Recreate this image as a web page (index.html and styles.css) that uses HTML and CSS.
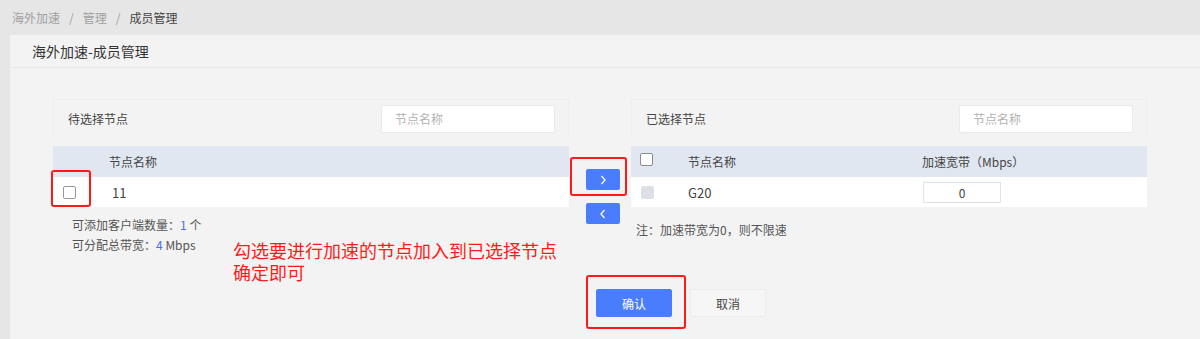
FILE: index.html
```html
<!DOCTYPE html>
<html lang="zh-CN">
<head>
    <meta charset="UTF-8">
    <title>海外加速-成员管理</title>
    <link rel="stylesheet" href="styles.css">
</head>
<body>
    <div class="crumbs">
        <span class="crumb">海外加速</span>
        <span class="sep">/</span>
        <span class="crumb">管理</span>
        <span class="sep">/</span>
        <span class="crumb current">成员管理</span>
    </div>

    <div class="panel">
        <div class="panel-title">海外加速-成员管理</div>

        <div class="panel-body">
            <div class="transfer">
                <div class="side">
                    <div class="side-head">
                        <span>待选择节点</span>
                        <div class="search">节点名称</div>
                    </div>
                    <div class="grid-head left-cols">
                        <span></span>
                        <span>节点名称</span>
                    </div>
                    <div class="grid-row left-cols">
                        <span><i class="check"></i></span>
                        <span class="cell-name">11</span>
                    </div>
                    <div class="info">
                        <p>可添加客户端数量：<b>1</b> 个</p>
                        <p>可分配总带宽：<b>4</b> Mbps</p>
                    </div>
                    <div class="hint">勾选要进行加速的节点加入到已选择节点<br>确定即可</div>
                    <div class="mark mark-check"></div>
                </div>

                <div class="mover">
                    <button class="move">
                        <svg width="8" height="10" viewBox="0 0 8 10"><polyline points="2.5,1 6,5 2.5,9" fill="none" stroke="#fff" stroke-width="1.3"/></svg>
                    </button>
                    <button class="move">
                        <svg width="8" height="10" viewBox="0 0 8 10"><polyline points="5.5,1 2,5 5.5,9" fill="none" stroke="#fff" stroke-width="1.3"/></svg>
                    </button>
                    <div class="mark mark-move"></div>
                </div>

                <div class="side">
                    <div class="side-head">
                        <span>已选择节点</span>
                        <div class="search">节点名称</div>
                    </div>
                    <div class="grid-head right-cols">
                        <span><i class="check"></i></span>
                        <span>节点名称</span>
                        <span>加速宽带（Mbps）</span>
                    </div>
                    <div class="grid-row right-cols">
                        <span><i class="check disabled"></i></span>
                        <span>G20</span>
                        <span><div class="bw">0</div></span>
                    </div>
                    <p class="note">注：加速带宽为0，则不限速</p>
                </div>
            </div>

            <div class="actions">
                <button class="btn primary">确认</button>
                <button class="btn">取消</button>
                <div class="mark mark-ok"></div>
            </div>
        </div>
    </div>
</body>
</html>
```

FILE: styles.css
```css
* {
    margin: 0;
    padding: 0;
    box-sizing: border-box;
}

body {
    background: #e6e6e6;
    font-family: "Noto Sans CJK SC", "Liberation Sans", sans-serif;
    font-size: 12px;
    color: #333;
    height: 339px;
    overflow: hidden;
}

.crumbs {
    height: 35px;
    padding: 0 12px;
    display: flex;
    align-items: center;
    gap: 9px;
    color: #a0a0a0;
    font-size: 12px;
}

.crumbs .current {
    color: #444;
}

.panel {
    margin-left: 10px;
    background: #f3f3f3;
    height: 304px;
}

.panel-title {
    height: 33px;
    padding-left: 22px;
    display: flex;
    align-items: center;
    font-size: 14px;
    color: #333;
    border-bottom: 1px solid #e9e9e9;
}

.panel-body {
    padding: 31px 0 0 43px;
}

.transfer {
    display: flex;
}

.side {
    width: 516px;
    position: relative;
}

.side-head {
    height: 38px;
    border: 1px solid #ebedf0;
    border-bottom: none;
    display: flex;
    align-items: center;
    justify-content: space-between;
    padding: 0 13px 0 14px;
    color: #444;
}

.search {
    width: 174px;
    height: 28px;
    background: #fff;
    border: 1px solid #e6ebf2;
    border-radius: 2px;
    color: #b3b3b3;
    padding-left: 13px;
    display: flex;
    align-items: center;
}

.grid-head,
.grid-row {
    display: grid;
    align-items: center;
}

.grid-head {
    margin-top: 9px;
    height: 31px;
    background: #e1e7f0;
    color: #444;
}

.grid-row {
    height: 30px;
    background: #fff;
    color: #444;
    font-size: 13px;
}

.left-cols {
    grid-template-columns: 56px 1fr;
}

.right-cols {
    grid-template-columns: 57px 234px 1fr;
}

.left-cols .check {
    margin-left: 10px;
}

.right-cols .check {
    margin-left: 9px;
}

.cell-name {
    padding-left: 3px;
}

.check {
    display: block;
    width: 13px;
    height: 13px;
    border: 1px solid #999;
    border-radius: 2px;
    background: #fff;
}

.check.disabled {
    border-color: #dcdfe6;
    background: #dcdfe6;
    margin-left: 10px;
}

.grid-head .check {
    margin-top: -5px;
    border-color: #8c8c8c;
}

.bw {
    width: 78px;
    height: 21px;
    margin-left: 1px;
    border: 1px solid #dfe4ec;
    background: #fff;
    display: flex;
    align-items: center;
    justify-content: center;
    font-size: 12px;
}

.info {
    padding: 8px 0 0 19px;
    color: #555;
    line-height: 20px;
}

.info b {
    font-weight: normal;
    color: #4a6fe3;
}

/* annotation text laid over the page */
.hint {
    position: absolute;
    left: 180px;
    top: 140px;
    color: #ff1a1a;
    font-size: 18px;
    line-height: 22px;
    white-space: nowrap;
}

.note {
    padding: 14px 0 0 5px;
    color: #555;
}

.mover {
    width: 62px;
    position: relative;
    display: flex;
    flex-direction: column;
    align-items: center;
    gap: 13px;
    padding: 70px 0 0 6px;
}

.move {
    width: 34px;
    height: 21px;
    border: none;
    border-radius: 2px;
    background: #4a7cfe;
    display: flex;
    align-items: center;
    justify-content: center;
}

.actions {
    padding: 34px 0 0 543px;
    display: flex;
    gap: 18px;
    position: relative;
}

.btn {
    width: 76px;
    height: 28px;
    border: 1px solid #e8ebf0;
    border-radius: 2px;
    background: #f6f6f6;
    color: #444;
    font-family: inherit;
    font-size: 12px;
}

.btn.primary {
    background: #4a7cfe;
    border-color: #4a7cfe;
    color: #fff;
}

/* red annotation frames */
.mark {
    position: absolute;
    border: 2px solid #ff1a1a;
    border-radius: 3px;
}

.mark-check {
    left: -2px;
    top: 71px;
    width: 40px;
    height: 37px;
}

.mark-move {
    left: 1px;
    top: 58px;
    width: 57px;
    height: 39px;
}

.mark-ok {
    left: 533px;
    top: 20px;
    width: 100px;
    height: 54px;
}
```
